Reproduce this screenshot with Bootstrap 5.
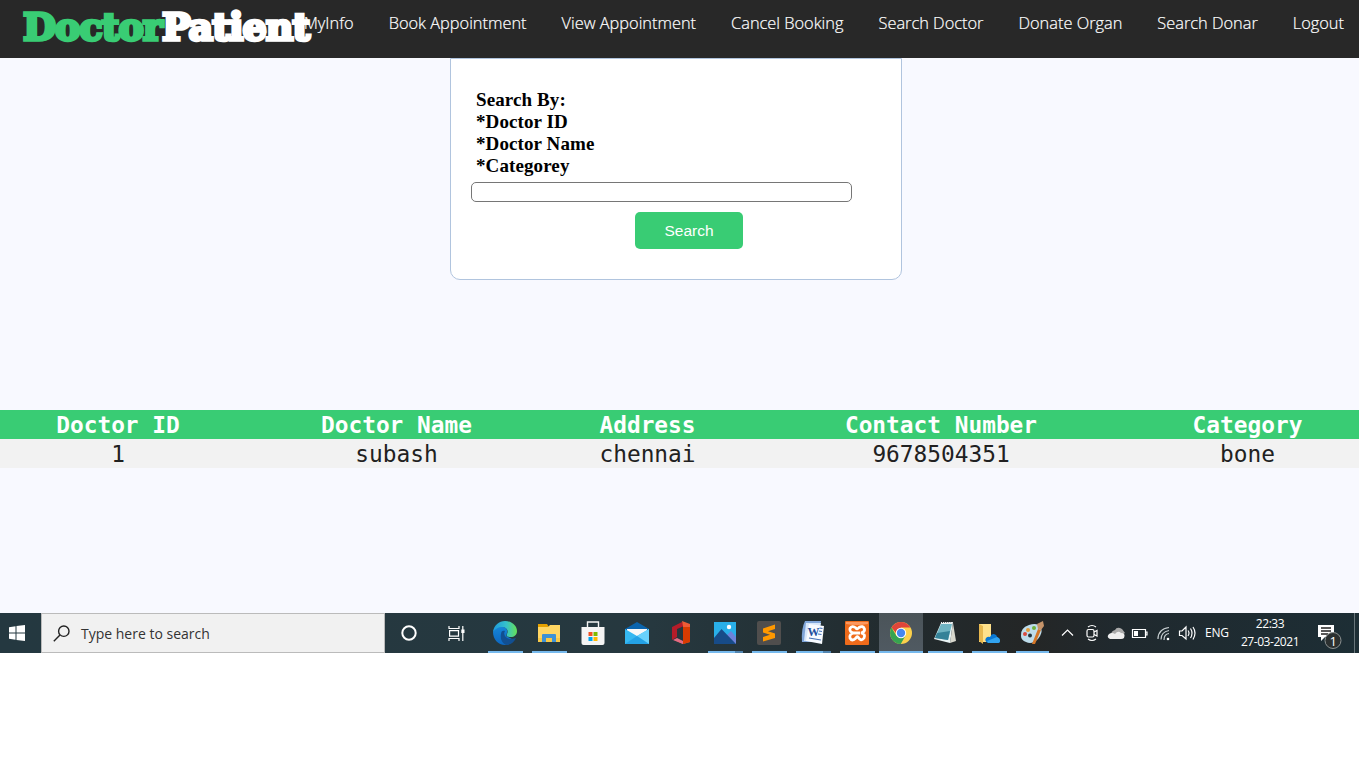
<!DOCTYPE html>
<html lang="en">
<head>
<meta charset="utf-8">
<meta name="viewport" content="width=device-width, initial-scale=1">
<title>DoctorPatient</title>
<link href="https://cdn.jsdelivr.net/npm/bootstrap@5.3.0/dist/css/bootstrap.min.css" rel="stylesheet">
<style>
body{background:#fff;width:1366px;height:768px;overflow:hidden}
.screen{width:1359px;height:653px;background:#f8f9ff}
.topbar{height:58px;background:#282828;padding:0 15px 0 23px}
.logo{font:700 38px/54px "DejaVu Serif",serif;color:#fff;width:0;white-space:nowrap;z-index:1;-webkit-text-stroke:3.4px #fff;letter-spacing:-.9px}
.logo .first{color:#39cc74;-webkit-text-stroke-color:#39cc74}
.menu{gap:35px;font:300 16.36px/46px "Open Sans",sans-serif}
.menu a{color:#fff;text-decoration:none;white-space:nowrap;-webkit-text-stroke:.2px #fff}
.panel{width:452px;height:222px;margin-left:450px;background:#fff;border:1px solid #b0c4de;border-radius:0 0 10px 10px;padding:30px 20px 0}
.panel label{font:700 19px/22px "Liberation Serif",serif;color:#000;margin-left:5px;display:block;letter-spacing:.1px}
.query{width:381px;height:20px;border:1px solid #767676;border-radius:5px;margin-top:5px;display:block;padding:0 4px}
.go{width:108px;height:37px;margin:10px 0 0 164px;background:#39cc74;color:#fff;border:0;border-radius:5px;font:15.5px/37px "Liberation Sans",sans-serif;padding:0;display:block}
.results{width:1359px;margin:130px 0 145px;table-layout:fixed;text-align:center;font:22.8px/27px "DejaVu Sans Mono",monospace;color:#212121}
.results th,.results td{padding:2px 0 0;height:29px;white-space:nowrap}
.results th:last-child,.results td:last-child{padding-right:8px}
.results thead{background:#39cc74;color:#fff}
.results tbody{background:#f2f2f2}
.taskbar{height:40px;background:linear-gradient(90deg,#243840 0,#26383f 48%,#222b2e 66%,#242626 76%,#20292e 82%,#1d2e35 100%);font-family:"Open Sans",sans-serif;color:#fff}
.taskbar>*{flex-shrink:0}
.start{width:41px;padding-right:8px}
.find{width:344px;background:#f1f1f1;border:1px solid #bbb;color:#333;font-size:14px;padding-left:11px;gap:11px}
.tool{width:48px}
.app{width:44px;height:40px}
.app.open::after{content:"";position:absolute;left:5px;right:4px;bottom:0;height:2px;background:#76b9ed}
.app.many::after{background:linear-gradient(90deg,#76b9ed 27px,#5285b0 27px)}
.app.current{background:linear-gradient(#4b5459,#505a62)}
.app.current::after{left:0;right:0}
.tray{margin-left:2px}
.lang{font-size:12px;width:24px;margin-left:9px;letter-spacing:-.2px}
.clock{font-size:12px;line-height:18px;width:64px;margin-left:9px;letter-spacing:-.45px;padding-top:2px}
.edgeline{width:1px;background:#68757a}
svg{display:block;flex:none}
</style>
</head>
<body>
<div class="screen d-flex flex-column">
<nav class="topbar d-flex justify-content-between flex-shrink-0">
<div class="logo position-relative"><span class="first">Doctor</span><span>Patient</span></div>
<div class="menu d-flex"><a href="#">MyInfo</a><a href="#">Book Appointment</a><a href="#">View Appointment</a><a href="#">Cancel Booking</a><a href="#">Search Doctor</a><a href="#">Donate Organ</a><a href="#">Search Donar</a><a href="#">Logout</a></div>
</nav>
<form class="panel flex-shrink-0">
<label for="q">Search By:<br>*Doctor ID<br>*Doctor Name<br>*Categorey</label>
<input id="q" class="query" type="text">
<button class="go" type="button">Search</button>
</form>
<table class="results">
<colgroup><col style="width:236px"><col style="width:321px"><col style="width:181px"><col style="width:406px"><col style="width:215px"></colgroup>
<thead><tr><th>Doctor ID</th><th>Doctor Name</th><th>Address</th><th>Contact Number</th><th>Category</th></tr></thead>
<tbody><tr><td>1</td><td>subash</td><td>chennai</td><td>9678504351</td><td>bone</td></tr></tbody>
</table>
<div class="taskbar d-flex flex-shrink-0">
<div class="start d-flex align-items-center justify-content-center"><svg width="16" height="16"><path fill="#fff" d="M0 2.2 6.5 1.3V7.5H0zM7.5 1.1 16 0V7.5H7.5zM0 8.5H6.5V14.7L0 13.8zM7.5 8.5H16V16L7.5 14.9z"/></svg></div>
<div class="find d-flex align-items-center"><svg width="17" height="17" fill="none" stroke="#222" stroke-width="1.4"><circle cx="10.800" cy="6.2" r="5.2"/><path d="M7 10 .8 16.2"/></svg><span>Type here to search</span></div>
<div class="tool d-flex align-items-center justify-content-center"><svg width="16" height="16"><circle cx="8" cy="8" r="6.7" fill="none" stroke="#fff" stroke-width="2"/></svg></div>
<div class="tool d-flex align-items-center justify-content-center me-1" style="width:46px"><svg width="17" height="17" fill="none" stroke="#fff" stroke-width="1.2"><path d="M1 1V3.5H11V1M1 16V13.5H11V16M1.6 5.6H10.5V11.2H1.6zM14.8 1V16"/><path fill="#fff" stroke="none" d="M13.3 4.5H16.5V8H13.3z"/></svg></div>

<div class="app open position-relative d-flex align-items-center justify-content-center"><svg width="24" height="24" viewBox="0 0 24 24"><defs><linearGradient id="ea"><stop stop-color="#1d99dc"/><stop offset=".55" stop-color="#35c1cc"/><stop offset="1" stop-color="#66df56"/></linearGradient><linearGradient id="eb" x2="0" y2="1"><stop stop-color="#1685d8"/><stop offset="1" stop-color="#0c66c0"/></linearGradient></defs><path fill="url(#eb)" d="M0 11C1 7 5 5 9 6c4 0 6 3 5 6l-1 3 8 4c-2 3-5 5-9 5C5 24 0 18 0 11z"/><path fill="#124f91" d="M8 13c0-3 2-4 4-3-2 3 0 7 5 8 3 0 5-1 6-1-2 4-5 7-10 7-4-2-6-6-5-11z"/><path fill="url(#ea)" d="M0 11C1 4 6 0 12 0c7 0 12 5 12 10 0 4-3 6-6 6-4 0-5-1-4-3 2-4-1-7-5-7-4 0-7 2-9 5z"/></svg></div>
<div class="app open position-relative d-flex align-items-center justify-content-center"><svg width="24" height="24"><path fill="#e5a100" d="M1 3H10L12 6H1z"/><path fill="#ffd663" d="M1 6H11L13 4H23V20H1z"/><path fill="#f8c949" d="M1 17H23V21H1z"/><path fill="#3e92d6" d="M5 21V14Q5 13 6 13H18Q19 13 19 14V21H15V17H9V21z"/></svg></div>
<div class="app position-relative d-flex align-items-center justify-content-center"><svg width="24" height="24"><path fill="none" stroke="#f5f5f5" stroke-width="1.4" d="M6.5 7V1H17.5V7"/><path fill="#f4f4f4" d="M.5 6H23.5V22Q23.5 24 21.5 24H2.5Q.5 24 .5 22z"/><path fill="#f25022" d="M7.5 11H11.5V15H7.5z"/><path fill="#7fba00" d="M12.5 11H16.5V15H12.5z"/><path fill="#00a4ef" d="M7.5 16H11.5V20H7.5z"/><path fill="#ffb900" d="M12.5 16H16.5V20H12.5z"/></svg></div>
<div class="app position-relative d-flex align-items-center justify-content-center"><svg width="24" height="24"><path fill="#0a64ad" d="M0 8 12 1 24 8V14H0z"/><path fill="#f8f8f8" d="M2 8H22V17H2z"/><path fill="#35b8f1" d="M0 8 12 15 24 8V23H0z"/><path fill="#69d2fc" d="M24 8V23L12 15z"/><path fill="#168fdc" d="M0 23 12 15 24 23z" opacity=".55"/></svg></div>
<div class="app position-relative d-flex align-items-center justify-content-center"><svg width="24" height="24"><path fill="#b51c29" d="M3 6 13 1 15 5 8 8V16L3 19z"/><path fill="#ef5b35" d="M13 0 21 3V21L14 23 5 19 14 20V5z"/><path fill="#d83b01" d="M14 6H21V21L14 23z"/><path fill="#e46a83" d="M4 19 8 17 14 20V23z"/></svg></div>
<div class="app open many position-relative d-flex align-items-center justify-content-center"><svg width="24" height="24"><path fill="#29afe9" d="M1 1H23V23H1z"/><path fill="#6d83da" d="M12 16 18 10 23 16V23H12z"/><path fill="#174b88" d="M1 17 8.5 8 23 23H1z"/><circle cx="16" cy="6" r="2.2" fill="#fff"/></svg></div>
<div class="app open position-relative d-flex align-items-center justify-content-center"><svg width="24" height="24"><rect width="24" height="24" rx="2" fill="#504e4d"/><path fill="#ff9800" d="M6 7.5 18 3.5V8L11 10.2 18 12.5V17L6 20.5V16L13 13.8 6 11.5z"/></svg></div>
<div class="app open many position-relative d-flex align-items-center justify-content-center"><svg width="24" height="24"><path fill="#80a6d9" d="M4 0H20L17 21H1Q0 8 4 0z"/><path fill="#d7e7fa" d="M5 2H20L16 20H3z"/><path fill="#f8fbff" d="M8 3 23 5 21 23 5 20z"/><path stroke="#4572b8" stroke-width="1.2" d="M18.500 7 21.500 7.500M18 10 21 10.500M17 13 20.500 13.500M8 17 20 19"/><text x="6.500" y="14.500" fill="#24509e" font-family="Liberation Serif" font-size="12" font-weight="bold">W</text></svg></div>
<div class="app open position-relative d-flex align-items-center justify-content-center"><svg width="24" height="24"><rect width="24" height="24" rx="1" fill="#ef6b1b"/><path fill="#fb9860" d="M1 1H23V3Q12 5 1 3z"/><path fill="none" stroke="#fff" stroke-width="2.8" d="M9 12Q4 11 5 7.5 7 4 11 7 12 9 14 6.5 18 4 19.5 8 20 11 16 12 21 13 19 17 16 21 13 16 12 15 11 17 7 21 5 17 4 13 9 12H15"/></svg></div>
<div class="app open current position-relative d-flex align-items-center justify-content-center"><svg width="24" height="24"><circle cx="12" cy="12" r="11" fill="#fbd04b"/><path fill="#df453a" d="M2.5 6.5A11 11 0 0 1 21.5 6.5H12V12H7z"/><path fill="#36a351" d="M2.5 6.5A11 11 0 0 0 11.8 23L16.5 14.5 7.5 15z"/><circle cx="12" cy="12" r="5.2" fill="#fff"/><circle cx="12" cy="12" r="4.2" fill="#4587ef"/></svg></div>
<div class="app open position-relative d-flex align-items-center justify-content-center"><svg width="24" height="24"><path fill="#d7d7cd" d="M20 2 23 20 17 22z"/><path fill="#e8f3f4" d="M8 2 20 1 17 22 1 18z"/><path fill="#70b4c2" d="M8 3 19 3 15 19 2 17z"/><path fill="#358298" d="M4 12 17 10 15 19 2 17z"/><path stroke="#eee" stroke-dasharray="1 1" stroke-width="2" d="M8 2H20"/></svg></div>
<div class="app open position-relative d-flex align-items-center justify-content-center"><svg width="24" height="24"><path fill="#ffe18b" d="M2 3H14V21H2z"/><path fill="#e8b84e" d="M2 3 6 5V23L2 20z"/><path fill="#0878d4" d="M11 22Q7 20 9 17 11 15 13 16 15 11 19 14 20 15 20 16 23 17 23 20 23 22 20 22z"/><path fill="#31a3ef" d="M10 20 20 16Q23 17 23 20 23 22 20 22H11z"/></svg></div>
<div class="app open position-relative d-flex align-items-center justify-content-center" style="width:42px"><svg width="24" height="24"><path fill="#bedcea" d="M1 15Q0 7 9 4 18 1 21 7 23 12 18 18 12 24 6 21 1 19 1 15z"/><circle cx="5" cy="13" r="2" fill="#d94a3e"/><circle cx="8" cy="9" r="2" fill="#e39c3b"/><circle cx="14" cy="7" r="2" fill="#6fb23c"/><circle cx="10" cy="14.5" r="2" fill="#23333c"/><path fill="#d47628" d="M18 8 21 9 15 23 12 23z"/><path fill="#c59369" d="M18 8 17 3 23 0 24 5 21 9z"/></svg></div>

<svg class="tray" width="141" height="40" fill="none" stroke="#fff" stroke-width="1.2"><path d="M7 22.5 12.5 17 18 22.5"/><rect x="32" y="16.5" width="7" height="7.5" rx="1.5"/><path d="M39 19 42 17.5V23L39 21.5M33 14Q37 11 41 14M33 26Q37 29 41 26"/><path stroke="none" fill="#aaa" d="M56 22Q56 18 60 17 62 13 67 16L70 20 60 26z"/><path stroke="none" fill="#eee" d="M55 26Q51 24 54 21 57 19 60 21 63 17 66 20 71 20 69 25 68 26 66 26z"/><path d="M77.5 16.5H90.5V24.5H77.5zM91 19H92V22H91"/><path stroke="none" fill="#fff" d="M79 18H83V23H79z"/><path stroke="#c8cfd1" d="M103 26Q103 16 114 14.500M106 26.5Q106 19 114 17.5M109 27Q109 21 114 20.500"/><circle cx="113" cy="26" r="1.3" fill="#fff" stroke="none"/><path d="M124.5 18H127L131 14V26L127 22.5H124.5zM133 17.5Q135 20 133 23M135.5 15.5Q138.500 20 135.5 25M138 14Q142 20 138 26.500"/></svg>
<div class="lang d-flex align-items-center">ENG</div>
<div class="clock text-center text-nowrap">22:33<br>27-03-2021</div>
<svg width="46" height="40"><path fill="#fff" d="M16 12H32V24H23L19 28V24H16z"/><path stroke="#222" stroke-width="1.3" d="M19 15H29M19 18H29M19 21H26"/><circle cx="31" cy="27.500" r="8" fill="#2b3030" stroke="#8c9292"/><text x="27.500" y="32.500" fill="#fff" font-family="Open Sans" font-size="13">1</text></svg>
<div class="edgeline ms-auto me-1"></div>
</div>
</div>
<script src="https://cdn.jsdelivr.net/npm/bootstrap@5.3.0/dist/js/bootstrap.bundle.min.js"></script>
</body>
</html>
